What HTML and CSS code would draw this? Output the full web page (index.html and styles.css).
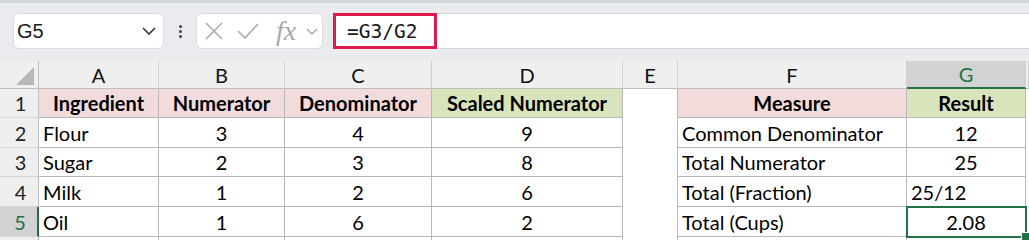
FILE: index.html
```html
<!DOCTYPE html>
<html>
<head>
<meta charset="utf-8">
<link rel="stylesheet" href="styles.css">
</head>
<body>
<div class="app">
  <div class="fbar">
    <div class="namebox">
      <span class="nb-text">G5</span>
      <svg class="chev" width="14" height="8" viewBox="0 0 14 8"><path d="M1 1 L7 7 L13 1" fill="none" stroke="#333" stroke-width="1.6"/></svg>
    </div>
    <div class="dots"><i></i><i></i><i></i></div>
    <div class="fxbox">
      <svg width="18" height="18" viewBox="0 0 18 18"><path d="M1 1 L17 17 M17 1 L1 17" stroke="#a8a8a8" stroke-width="1.5" fill="none"/></svg>
      <svg width="22" height="16" viewBox="0 0 22 16"><path d="M1 8 L8 15 L21 1" stroke="#a8a8a8" stroke-width="1.5" fill="none"/></svg>
      <span class="fx">fx</span>
      <svg class="chev2" width="12" height="7" viewBox="0 0 12 7"><path d="M1 1 L6 6 L11 1" fill="none" stroke="#a8a8a8" stroke-width="1.4"/></svg>
    </div>
    <div class="formula">
      <div class="formula-hl">=G3/G2</div>
    </div>
  </div>
  <div class="sheet">
    <div class="row hdr">
      <div class="c rh corner"><span class="tri"></span></div>
      <div class="c ch w-a">A</div>
      <div class="c ch w-b">B</div>
      <div class="c ch w-c">C</div>
      <div class="c ch w-d">D</div>
      <div class="c ch w-e">E</div>
      <div class="c ch w-f">F</div>
      <div class="c ch w-g sel">G</div>
      <div class="c ch w-r"></div>
    </div>
    <div class="row h29">
      <div class="c rh">1</div>
      <div class="c td w-a pink b ctr">Ingredient</div>
      <div class="c td w-b pink b ctr">Numerator</div>
      <div class="c td w-c pink b ctr">Denominator</div>
      <div class="c td w-d green b ctr">Scaled Numerator</div>
      <div class="c blank w-e"></div>
      <div class="c td w-f pink b ctr">Measure</div>
      <div class="c td w-g green b ctr">Result</div>
      <div class="c blank2 w-r"></div>
    </div>
    <div class="row h30">
      <div class="c rh">2</div>
      <div class="c td w-a">Flour</div>
      <div class="c td w-b ctr">3</div>
      <div class="c td w-c ctr">4</div>
      <div class="c td w-d ctr">9</div>
      <div class="c blank w-e"></div>
      <div class="c td w-f">Common Denominator</div>
      <div class="c td w-g ctr">12</div>
      <div class="c blank2 w-r"></div>
    </div>
    <div class="row h29">
      <div class="c rh">3</div>
      <div class="c td w-a">Sugar</div>
      <div class="c td w-b ctr">2</div>
      <div class="c td w-c ctr">3</div>
      <div class="c td w-d ctr">8</div>
      <div class="c blank w-e"></div>
      <div class="c td w-f">Total Numerator</div>
      <div class="c td w-g ctr">25</div>
      <div class="c blank2 w-r"></div>
    </div>
    <div class="row h30">
      <div class="c rh">4</div>
      <div class="c td w-a">Milk</div>
      <div class="c td w-b ctr">1</div>
      <div class="c td w-c ctr">2</div>
      <div class="c td w-d ctr">6</div>
      <div class="c blank w-e"></div>
      <div class="c td w-f">Total (Fraction)</div>
      <div class="c td w-g">25/12</div>
      <div class="c blank2 w-r"></div>
    </div>
    <div class="row h30">
      <div class="c rh rsel">5</div>
      <div class="c td w-a">Oil</div>
      <div class="c td w-b ctr">1</div>
      <div class="c td w-c ctr">6</div>
      <div class="c td w-d ctr">2</div>
      <div class="c blank w-e"></div>
      <div class="c td w-f">Total (Cups)</div>
      <div class="c td w-g ctr active">2.08<span class="handle"></span></div>
      <div class="c blank2 w-r"></div>
    </div>
    <div class="row tail">
      <div class="c rh"></div>
      <div class="c td w-a"></div>
      <div class="c td w-b"></div>
      <div class="c td w-c"></div>
      <div class="c td w-d"></div>
      <div class="c blank w-e"></div>
      <div class="c td w-f"></div>
      <div class="c td w-g"></div>
      <div class="c blank2 w-r"></div>
    </div>
  </div>
</div>
</body>
</html>
```
FILE: styles.css
```css
html, body {
  margin: 0;
  padding: 0;
}
body {
  width: 1029px;
  height: 240px;
  overflow: hidden;
  background: #e9ebee;
  font-family: Lato, "Open Sans", sans-serif;
}
.app {
  display: flex;
  flex-direction: column;
}
.fbar {
  display: flex;
  align-items: center;
  height: 36px;
  padding-top: 10px;
  padding-bottom: 12px;
  border-top: 3px solid #d3d6da;
}
.namebox {
  margin-left: 13px;
  width: 151px;
  height: 36px;
  box-sizing: border-box;
  background: #fff;
  border: 1px solid #d9dbde;
  border-radius: 6px;
  display: flex;
  align-items: center;
  justify-content: space-between;
  padding: 0 7px 0 3px;
}
.nb-text {
  font-family: "Liberation Sans", Arial, sans-serif;
  font-size: 20px;
  color: #1a1a1a;
}
.dots {
  width: 32px;
  display: flex;
  flex-direction: column;
  align-items: center;
  gap: 2px;
}
.dots i {
  display: block;
  width: 3px;
  height: 3px;
  border-radius: 50%;
  background: #444;
}
.fxbox {
  width: 127px;
  height: 36px;
  box-sizing: border-box;
  background: #fff;
  border: 1px solid #d9dbde;
  border-radius: 6px;
  display: flex;
  align-items: center;
  padding-left: 8px;
  gap: 14px;
}
.fx {
  font-family: "Liberation Serif", serif;
  font-style: italic;
  font-size: 28px;
  color: #a8a8a8;
  margin-left: 3px;
  margin-right: -4px;
  line-height: 1;
}
.formula {
  margin-left: 10px;
  flex: 1;
  height: 36px;
  background: #fff;
  border-top: 1px solid #d2d4d6;
  border-bottom: 1px solid #d2d4d6;
  box-sizing: border-box;
  display: flex;
  align-items: stretch;
}
.formula-hl {
  width: 104px;
  margin-top: -1px;
  margin-bottom: -1px;
  box-sizing: border-box;
  border: 3px solid #e0194c;
  font-family: "DejaVu Sans Mono", monospace;
  font-size: 19.5px;
  color: #1a1a1a;
  display: flex;
  align-items: center;
  padding-left: 11px;
}
.sheet {
  background: #fff;
  display: flex;
  flex-direction: column;
}
.row {
  display: flex;
}
.hdr { height: 28px; }
.h29 { height: 29px; }
.h30 { height: 30px; }
.tail { height: 5px; }
.c {
  box-sizing: border-box;
  height: 100%;
  display: flex;
  align-items: center;
  font-size: 20px;
  color: #000;
  white-space: nowrap;
  position: relative;
}
.rh {
  width: 39px;
  background: #efefef;
  border-right: 1px solid #bdbdbd;
  border-bottom: 1px solid #d6d6d6;
  justify-content: center;
  color: #222;
  padding-left: 3px;
}
.corner {
  border-bottom: 1px solid #bdbdbd;
}
.tri {
  position: absolute;
  right: 4px;
  bottom: 3px;
  width: 0;
  height: 0;
  border-left: 18px solid transparent;
  border-bottom: 18px solid #b8b8b8;
}
.ch {
  background: #efefef;
  border-right: 1px solid #d0d0d0;
  border-bottom: 1px solid #bdbdbd;
  justify-content: center;
  color: #111;
}
.ch.sel {
  background: #d2d2d2;
  color: #217346;
  border-bottom: 2px solid #217346;
}
.w-a { width: 120px; }
.w-b { width: 126px; }
.w-c { width: 147px; }
.w-d { width: 191px; }
.w-e { width: 55px; }
.w-f { width: 229px; }
.w-g { width: 119px; }
.w-r { width: 3px; }
.td {
  border-right: 1px solid #b8b8b8;
  border-bottom: 1px solid #b8b8b8;
  padding-left: 4px;
}
.blank {
  border-right: 1px solid #b8b8b8;
}
.blank2 {
  background: #fff;
}
.ctr {
  justify-content: center;
  padding-left: 0;
}
.b { font-weight: 700; }
.pink { background: #f2dcdb; }
.green { background: #d8e4bc; }
.rsel {
  background: #d2d2d2;
  color: #217346;
  border-right: 2px solid #217346;
}
.active {
  outline: 2px solid #217346;
  outline-offset: -1px;
  z-index: 2;
}
.handle {
  position: absolute;
  right: -5px;
  bottom: -5px;
  width: 7px;
  height: 7px;
  background: #217346;
  border: 1px solid #fff;
}
```
